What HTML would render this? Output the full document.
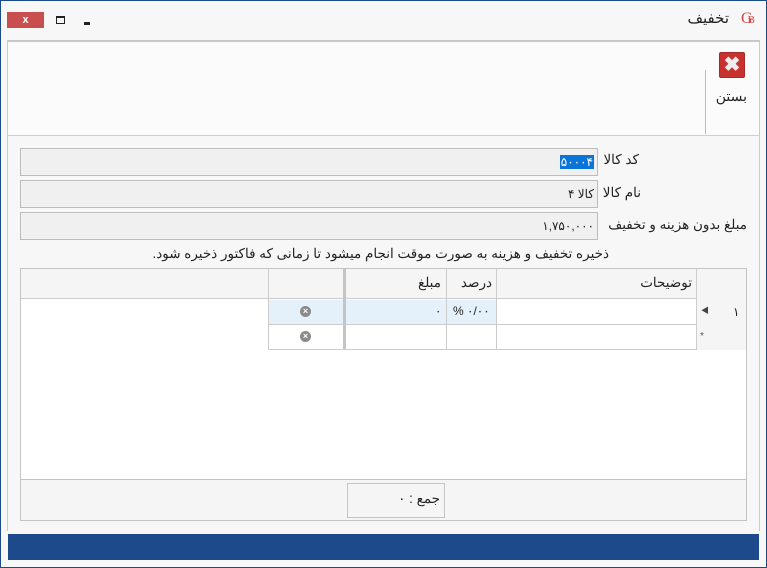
<!DOCTYPE html>
<html><head><meta charset="utf-8"><style>
*{margin:0;padding:0;box-sizing:border-box}
body{width:767px;height:568px;overflow:hidden;background:#f7f7f7;font-family:"Liberation Sans","Noto Sans CJK SC",sans-serif;font-size:13px;color:#222;position:relative}
.a{position:absolute}
.win{left:0;top:0;width:767px;height:568px;border:1px solid #1c4a8a}
.inp{left:20px;width:578px;height:28px;border:1px solid #bdbdbd;background:#f0f0f0;text-align:right;padding-right:3px;line-height:26px;font-size:12px}
.lbl{direction:rtl;font-size:13.5px;white-space:nowrap}
.x{width:11px;height:11px;border-radius:50%;background:#8a8a8a;color:#fff;font-size:9px;line-height:11px;text-align:center;font-weight:bold}
</style></head><body>
<div class="a win"></div>
<div class="a" style="left:7px;top:12px;width:37px;height:16px;background:#c94f4f;color:#fff;text-align:center;font-size:11px;line-height:16px;font-weight:bold">x</div>
<div class="a" style="left:56px;top:16px;width:9px;height:8px;border:1px solid #222;border-top-width:2px"></div>
<div class="a" style="left:84px;top:22px;width:6px;height:3px;background:#222"></div>
<div class="a lbl" style="right:38px;top:9px;font-size:15px">تخفیف</div>
<div class="a" style="left:741px;top:10px;color:#d04848;font-family:'Liberation Serif',serif;font-size:16px">G<span style="font-size:11px;margin-left:-5px">B</span></div>
<!-- toolbar -->
<div class="a" style="left:7px;top:40px;width:753px;height:96px;background:#fbfbfb;border-top:2px solid #c8c8c8;border-bottom:1px solid #cfcfcf;border-left:1px solid #ccc;border-right:1px solid #ccc"></div>
<div class="a" style="left:705px;top:70px;width:1px;height:64px;background:#bbb"></div>
<div class="a" style="left:719px;top:52px;width:26px;height:26px;background:#c8322e;border:1px solid #a52a2a;border-radius:2px;color:#eee;text-align:center;font-size:20px;line-height:24px;font-weight:bold">✖</div>
<div class="a lbl" style="right:20px;top:88px;font-size:14px">بستن</div>
<!-- form area -->
<div class="a" style="left:7px;top:136px;width:753px;height:395px;border-left:1px solid #ccc;border-right:1px solid #ccc"></div>
<div class="a inp" style="top:148px"><span style="background:#0a74d8;color:#fff;padding:0 1px">۵۰۰۰۴</span></div>
<div class="a lbl" style="right:128px;top:152px">کد کالا</div>
<div class="a inp" style="top:180px">کالا ۴</div>
<div class="a lbl" style="right:126px;top:185px">نام کالا</div>
<div class="a inp" style="top:212px">۱,۷۵۰,۰۰۰</div>
<div class="a lbl" style="right:20px;top:217px">مبلغ بدون هزینه و تخفیف</div>
<div class="a lbl" style="right:158px;top:246px">ذخیره تخفیف و هزینه به صورت موقت انجام میشود تا زمانی که فاکتور ذخیره شود.</div>
<!-- grid -->
<div class="a" style="left:20px;top:268px;width:727px;height:253px;border:1px solid #c4c4c4;background:#fff"></div>
<div class="a" style="left:21px;top:269px;width:725px;height:30px;background:#f5f5f5;border-bottom:1px solid #ccc"></div>
<div class="a" style="left:696px;top:269px;width:50px;height:81px;background:#f5f5f5;border-left:1px solid #ccc"></div>
<div class="a" style="left:268px;top:269px;width:1px;height:81px;background:#ccc"></div>
<div class="a" style="left:343px;top:269px;width:3px;height:81px;background:#c4c4c4"></div>
<div class="a" style="left:446px;top:269px;width:1px;height:81px;background:#ccc"></div>
<div class="a" style="left:496px;top:269px;width:1px;height:81px;background:#ccc"></div>
<div class="a" style="left:269px;top:300px;width:428px;height:25px;border-bottom:1px solid #ccc"></div>
<div class="a" style="left:269px;top:300px;width:74px;height:24px;background:#e4f0fa"></div>
<div class="a" style="left:346px;top:300px;width:100px;height:24px;background:#e4f0fa"></div>
<div class="a" style="left:447px;top:300px;width:49px;height:24px;background:#e4f0fa"></div>
<div class="a" style="left:269px;top:349px;width:428px;height:1px;background:#ccc"></div>
<div class="a lbl" style="right:75px;top:275px">توضیحات</div>
<div class="a lbl" style="right:275px;top:275px">درصد</div>
<div class="a lbl" style="right:326px;top:275px">مبلغ</div>
<div class="a" style="left:701px;top:305px;font-size:8px;color:#444">◀</div>
<div class="a" style="left:733px;top:305px;font-size:12px">۱</div>
<div class="a" style="left:700px;top:331px;font-size:10px;color:#555">*</div>
<div class="a" style="left:453px;top:304px;font-size:12px">% ۰/۰۰</div>
<div class="a" style="left:435px;top:304px;font-size:12px">۰</div>
<div class="a x" style="left:300px;top:306px">×</div>
<div class="a x" style="left:300px;top:331px">×</div>
<div class="a" style="left:21px;top:479px;width:725px;height:41px;background:#f5f5f5;border-top:1px solid #c4c4c4"></div>
<div class="a" style="left:347px;top:483px;width:98px;height:35px;border:1px solid #c4c4c4;background:#f5f5f5"></div>
<div class="a lbl" style="right:327px;top:491px">جمع : ۰</div>
<div class="a" style="left:8px;top:534px;width:751px;height:26px;background:#1c4a8a"></div>
</body></html>
